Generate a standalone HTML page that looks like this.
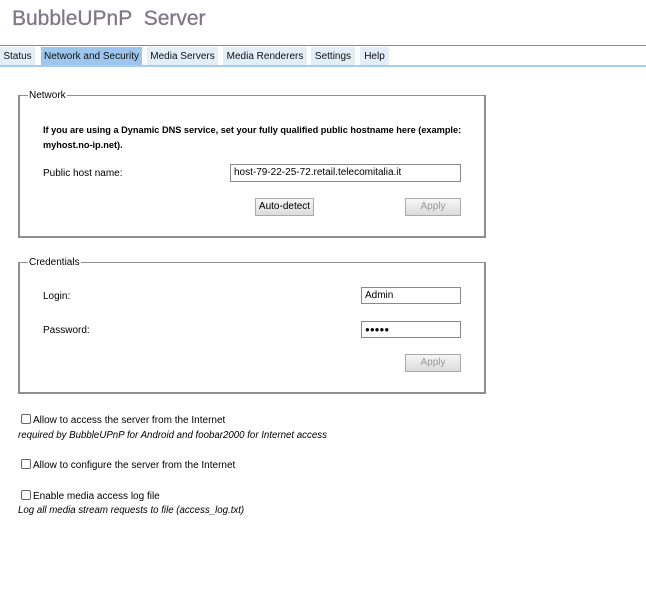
<!DOCTYPE html>
<html><head><style>
body{margin:0;width:646px;height:600px;background:#fff;font-family:"Liberation Sans",Arial,sans-serif;font-size:10px;color:#000;position:relative;overflow:hidden}
.a{position:absolute;white-space:nowrap}
h1{position:absolute;left:12px;top:7px;margin:0;font-size:21px;font-weight:normal;color:#7f7888;word-spacing:6px;-webkit-text-stroke:0.3px #7f7888}
.tab{position:absolute;top:47px;height:19px;line-height:19px;background:#e2eef8;font-size:10px;text-align:center;color:#111;white-space:nowrap}
.box{position:absolute;border:2px solid #8f8f8f;border-top:1px solid #8f8f8f;box-sizing:border-box}
.leg{position:absolute;background:#fff;padding:0 1px}
.inp{position:absolute;border:1px solid #888;height:16px;box-sizing:border-box;background:#fff;font-size:10px;line-height:14px;padding-left:3px;white-space:nowrap}
.btn{position:absolute;height:18px;box-sizing:border-box;border:1px solid #aaa;background:linear-gradient(#f6f6f6,#dcdcdc);text-align:center;line-height:16px;font-size:10px}
.cb{position:absolute;width:8px;height:8px;border:1px solid #666;border-radius:2px;background:#fff}
i{font-style:italic;font-size:9.7px}
</style></head><body>
<h1>BubbleUPnP Server</h1>
<div class="a" style="left:0;top:45px;width:646px;height:1px;background:#8a8a8a"></div>
<div class="tab" style="left:0;width:35px">Status</div>
<div class="tab" style="left:41px;width:101px;background:#9cc6ee">Network and Security</div>
<div class="tab" style="left:147px;width:71px">Media Servers</div>
<div class="tab" style="left:223px;width:84px">Media Renderers</div>
<div class="tab" style="left:311px;width:44px">Settings</div>
<div class="tab" style="left:360px;width:29px">Help</div>
<div class="a" style="left:0;top:65px;width:646px;height:2px;background:#a9cdee"></div>

<div class="box" style="left:18px;top:95px;width:468px;height:143px"></div>
<div class="leg" style="left:28px;top:90px">Network</div>
<div class="a" style="left:43px;top:123px;font-weight:bold;line-height:15px;font-size:9.2px">If you are using a Dynamic DNS service, set your fully qualified public hostname here (example:<br>myhost.no-ip.net).</div>
<div class="a" style="left:43px;top:168px">Public host name:</div>
<div class="inp" style="left:230px;top:164px;width:231px;height:18px;line-height:16px">host-79-22-25-72.retail.telecomitalia.it</div>
<div class="btn" style="left:255px;top:198px;width:59px">Auto-detect</div>
<div class="btn" style="left:405px;top:198px;width:56px;color:#999">Apply</div>

<div class="box" style="left:18px;top:262px;width:468px;height:132px"></div>
<div class="leg" style="left:28px;top:257px">Credentials</div>
<div class="a" style="left:43px;top:291px">Login:</div>
<div class="inp" style="left:361px;top:287px;width:100px;height:17px;line-height:15px">Admin</div>
<div class="a" style="left:43px;top:325px">Password:</div>
<div class="inp" style="left:361px;top:321px;width:100px;height:17px;font-size:8px;line-height:15px">●●●●●</div>
<div class="btn" style="left:405px;top:354px;width:56px;color:#999">Apply</div>

<div class="cb" style="left:21px;top:414px"></div>
<div class="a" style="left:33px;top:415px">Allow to access the server from the Internet</div>
<div class="a" style="left:18px;top:430px"><i>required by BubbleUPnP for Android and foobar2000 for Internet access</i></div>
<div class="cb" style="left:21px;top:459px"></div>
<div class="a" style="left:33px;top:460px">Allow to configure the server from the Internet</div>
<div class="cb" style="left:21px;top:490px"></div>
<div class="a" style="left:33px;top:491px">Enable media access log file</div>
<div class="a" style="left:18px;top:505px"><i>Log all media stream requests to file (access_log.txt)</i></div>
</body></html>
